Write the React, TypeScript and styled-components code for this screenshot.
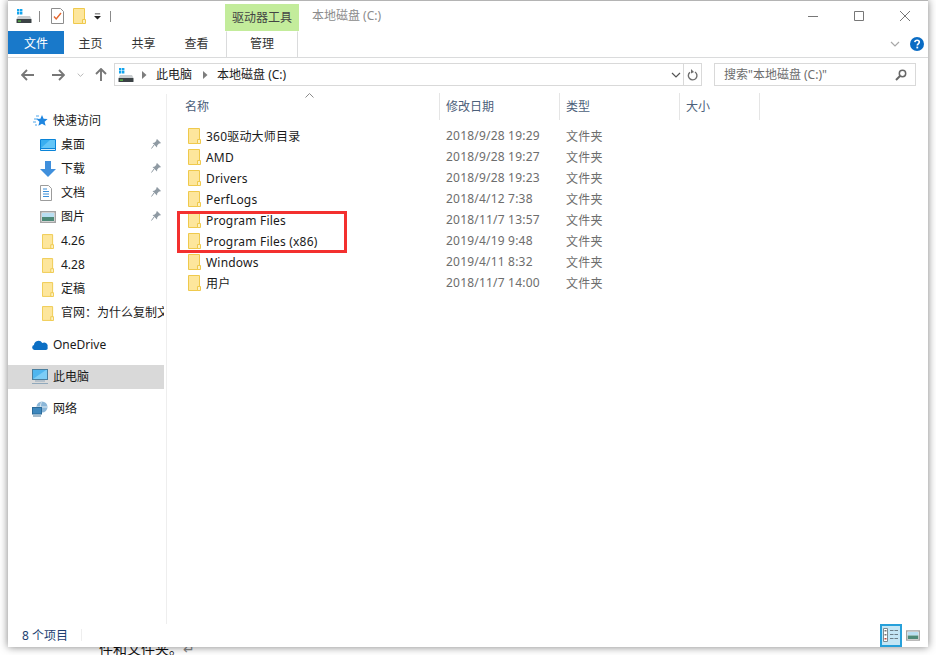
import React from 'react';
import styled, { createGlobalStyle } from 'styled-components';

const GlobalStyle = createGlobalStyle`
  html, body { margin: 0; padding: 0; background: #fff; }
  body { font-family: "Noto Sans", "Noto Sans CJK SC", sans-serif; font-size: 12px; color: #1a1a1a; }
`;

const Page = styled.div`
  width: 936px;
  height: 655px;
  overflow: hidden;
  background: #fff;
`;

const Window = styled.div`
  position: relative;
  z-index: 1;
  margin: 0 8px;
  width: 920px;
  height: 647px;
  background: #fff;
  border-top: 1px solid #b4b4b4;
  box-sizing: border-box;
  box-shadow: 0 0 8px rgba(0, 0, 0, 0.5);
  display: flex;
  flex-direction: column;
`;

const BehindText = styled.div`
  margin: -7px 0 0 99px;
  font-size: 14px;
  line-height: 16px;
  color: #111;
  font-family: "Noto Sans CJK SC", sans-serif;
`;

const ReturnMark = styled.span`
  color: #888;
`;

const TitleRow = styled.div`
  height: 30px;
  display: flex;
  align-items: center;
  padding-left: 8px;
`;

const QuickDivider = styled.div<{ $left: number; $right: number }>`
  width: 1px;
  height: 11px;
  background: #8a8a8a;
  margin: 0 ${(p) => p.$right}px 0 ${(p) => p.$left}px;
`;

const QuickSlot = styled.span<{ $left: number }>`
  margin-left: ${(p) => p.$left}px;
  display: flex;
`;

const ToolTab = styled.div`
  align-self: flex-end;
  width: 74px;
  height: 27px;
  margin-left: 114px;
  padding-bottom: 2px;
  box-sizing: border-box;
  background: #c3ec9b;
  color: #444;
  display: flex;
  align-items: center;
  justify-content: center;
`;

const WindowTitle = styled.div`
  margin-left: 13px;
  color: #8c8c8c;
  padding-bottom: 2px;
`;

const WindowButtons = styled.div`
  margin-left: auto;
  display: flex;
  align-items: center;
  padding-right: 18px;
  gap: 36px;
`;

const TabRow = styled.div`
  height: 26px;
  display: flex;
  align-items: flex-start;
  border-bottom: 1px solid #dadbdc;
  position: relative;
`;

const FileTab = styled.div`
  width: 56px;
  height: 23px;
  background: #1979ca;
  color: #fff;
  display: flex;
  align-items: center;
  justify-content: center;
`;

const Tab = styled.div`
  width: 53px;
  height: 23px;
  display: flex;
  align-items: center;
  justify-content: center;
  color: #333;
`;

const ManageTab = styled(Tab)`
  width: 72px;
  height: 26px;
  margin-left: 3px;
  padding-bottom: 3px;
  box-sizing: border-box;
  border: 1px solid #dadbdc;
  border-width: 1px 1px 0;
  border-top-color: #fff;
`;

const RibbonRight = styled.div`
  margin-left: auto;
  height: 26px;
  display: flex;
  align-items: center;
  gap: 10px;
  padding: 0 4px 0 0;
`;

const AddressRow = styled.div`
  height: 33px;
  display: flex;
  align-items: center;
`;

const NavButtons = styled.div`
  width: 106px;
  padding-left: 13px;
  box-sizing: border-box;
  display: flex;
  align-items: center;
`;

const NavGap = styled.span<{ $width: number }>`
  width: ${(p) => p.$width}px;
`;

const AddressBox = styled.div`
  width: 588px;
  height: 23px;
  box-sizing: border-box;
  border: 1px solid #d9d9d9;
  display: flex;
  align-items: center;
  padding-left: 3px;
  color: #222;
`;

const Crumb = styled.span<{ $left: number }>`
  margin: 0 9px 0 ${(p) => p.$left}px;
  display: flex;
`;

const BoxText = styled.span`
  padding-bottom: 2px;
`;

const BoxEnd = styled.div`
  margin-left: auto;
  display: flex;
  align-items: center;
  height: 100%;
`;

const RefreshCell = styled.div`
  width: 17px;
  height: 100%;
  margin-left: 2px;
  border-left: 1px solid #d9d9d9;
  display: flex;
  align-items: center;
  justify-content: center;
`;

const SearchBox = styled.div`
  margin-left: 12px;
  width: 202px;
  height: 23px;
  box-sizing: border-box;
  border: 1px solid #d9d9d9;
  display: flex;
  align-items: center;
  justify-content: space-between;
  padding: 0 8px 0 9px;
  color: #6d6d6d;
`;

const Body = styled.div`
  flex: 1;
  display: flex;
  min-height: 0;
`;

const NavPane = styled.div`
  width: 159px;
  box-sizing: border-box;
  border-right: 1px solid #eeeeee;
  margin-top: 3px;
  padding-top: 15px;
`;

const NavRow = styled.div<{ $indent: number; $gap?: number; $selected?: boolean }>`
  width: 156px;
  height: 24px;
  margin-top: ${(p) => p.$gap ?? 0}px;
  padding: 0 0 2px ${(p) => p.$indent}px;
  box-sizing: border-box;
  display: flex;
  align-items: center;
  white-space: nowrap;
  overflow: hidden;
  background: ${(p) => (p.$selected ? '#d9d9d9' : 'transparent')};
  color: #1a1a1a;
`;

const NavIcon = styled.span<{ $width: number }>`
  width: ${(p) => p.$width}px;
  flex: none;
  display: flex;
  align-items: center;
  padding-top: 2px;
`;

const PinSlot = styled.span`
  margin-left: auto;
  padding-right: 3px;
  display: flex;
`;

const Content = styled.div`
  flex: 1;
  padding-top: 2px;
  position: relative;
`;

const HeaderRow = styled.div`
  height: 27px;
  display: grid;
  grid-template-columns: 273px 120px 120px 80px;
  color: #4c607a;
`;

const HeaderCell = styled.div`
  padding: 0 0 2px 18px;
  border-right: 1px solid #e5e5e5;
  display: flex;
  align-items: center;
  box-sizing: border-box;
  position: relative;
  &:not(:first-child) { padding-left: 6px; }
`;

const SortCaret = styled.span`
  position: absolute;
  left: 138px;
  top: 0;
  display: flex;
`;

const Rows = styled.div`
  padding-top: 5px;
`;

const FileRow = styled.div`
  height: 21px;
  display: grid;
  grid-template-columns: 273px 120px 120px;
  align-items: center;
`;

const NameCell = styled.div`
  display: flex;
  align-items: center;
  padding-left: 21px;
  gap: 5px;
  color: #1a1a1a;
  letter-spacing: 0.2px;
  line-height: 18px;
`;

const FileName = styled.span`
  padding-top: 2px;
`;

const MetaCell = styled.div`
  padding-left: 6px;
  color: #6d6d6d;
  letter-spacing: 0.2px;
`;

const Highlight = styled.div`
  position: absolute;
  left: 10px;
  top: 120px;
  width: 170px;
  height: 42px;
  box-sizing: border-box;
  border: 3px solid #f3302f;
`;

const StatusBar = styled.div`
  height: 22px;
  display: flex;
  align-items: center;
  padding: 0 0 1px 14px;
  color: #1d3f72;
  position: relative;
`;

const StatusDivider = styled.div`
  width: 1px;
  height: 12px;
  background: #eeeeee;
  margin-left: 13px;
`;

const ViewButtons = styled.div`
  margin-left: auto;
  display: flex;
  align-items: center;
  padding-right: 4px;
`;

const ViewButton = styled.div<{ $active?: boolean }>`
  width: 22px;
  height: 23px;
  box-sizing: border-box;
  display: flex;
  align-items: center;
  justify-content: center;
  border: 2px solid ${(p) => (p.$active ? '#26a0da' : 'transparent')};
  background: ${(p) => (p.$active ? '#c4e6f5' : 'transparent')};
`;

const Folder = ({ w = 13, h = 16 }: { w?: number; h?: number }) => (
  <svg width={w} height={h} viewBox="0 0 13 16">
    <path d="M.5.5h11v15H.5z" fill="#fde69c" stroke="#efc94c" />
    <path d="M9.5 15.5v-4h3v4z" fill="#fdf2c4" stroke="#efc94c" />
  </svg>
);

const Drive = () => (
  <svg width="16" height="16" viewBox="0 0 16 16">
    <path d="M1 1h2.4v2.4H1zM4 1h2.4v2.4H4zM1 4h2.4v2.4H1zM4 4h2.4v2.4H4z" fill="#12a5ee" />
    <path d="M2 8h12l1.5 3H.5z" fill="#c9cdd0" />
    <rect x="0.5" y="11" width="15" height="4" rx="0.5" fill="#3b4245" />
    <rect x="2" y="12.5" width="3" height="1.2" fill="#62d04a" />
  </svg>
);

const Check = () => (
  <svg width="13" height="16" viewBox="0 0 13 16">
    <path d="M.5.5h9l3 3v12H.5z" fill="#fff" stroke="#8d8d8d" />
    <path d="M3 8.500l2.200 2.500L10 5" fill="none" stroke="#e4672f" strokeWidth="1.4" />
  </svg>
);

const DropMark = () => (
  <svg width="7" height="7" viewBox="0 0 8 7">
    <path d="M1 0h6v1H1zM0 3h8L4 7z" fill="#222" />
  </svg>
);

const Minimize = () => (
  <svg width="10" height="10" viewBox="0 0 10 10"><path d="M0 5.500h10" stroke="#777" /></svg>
);
const Maximize = () => (
  <svg width="10" height="10" viewBox="0 0 10 10"><path d="M.5.5h9v9h-9z" fill="none" stroke="#777" /></svg>
);
const Close = () => (
  <svg width="10" height="10" viewBox="0 0 10 10"><path d="M0 0l10 10M10 0L0 10" stroke="#777" /></svg>
);

const Chevron = ({ color = '#8a8a8a', w = 10 }: { color?: string; w?: number }) => (
  <svg width={w} height="6" viewBox="0 0 10 6">
    <path d="M1 1l4 4 4-4" fill="none" stroke={color} strokeWidth="1.2" />
  </svg>
);

const Help = () => (
  <svg width="14" height="14" viewBox="0 0 14 14">
    <circle cx="7" cy="7" r="7" fill="#0a6cc4" />
    <path d="M4.800 5.200C5 3.800 6 3.200 7.100 3.200c1.300 0 2.200.8 2.200 1.900 0 1.700-2 1.700-2 3.400" fill="none" stroke="#fff" strokeWidth="1.6" />
    <rect x="6.400" y="9.600" width="1.800" height="1.800" fill="#fff" />
  </svg>
);

const Arrow = ({ dir, color }: { dir: 'left' | 'right' | 'up'; color: string }) => {
  const d = { left: 'M6 1L1 6l5 5M1 6h12', right: 'M8 1l5 5-5 5M13 6H1', up: 'M1 6l5-5 5 5M6 1v12' }[dir];
  return (
    <svg width={dir === 'up' ? 12 : 14} height={dir === 'up' ? 14 : 12} viewBox={dir === 'up' ? '0 0 12 14' : '0 0 14 12'}>
      <path d={d} fill="none" stroke={color} strokeWidth="1.9" />
    </svg>
  );
};

const CrumbArrow = () => (
  <svg width="5" height="8" viewBox="0 0 5 8"><path d="M0 0l4.500 4L0 8z" fill="#7d7d7d" /></svg>
);

const Refresh = () => (
  <svg width="11" height="12" viewBox="0 0 11 12">
    <path d="M3 3.200A4.300 4.300 0 1 0 8 3" fill="none" stroke="#6e6e6e" strokeWidth="1.4" />
    <path d="M4 0v4.500L7 3z" fill="#6e6e6e" />
  </svg>
);

const Magnifier = () => (
  <svg width="12" height="12" viewBox="0 0 12 12">
    <circle cx="7.500" cy="4.500" r="3.200" fill="none" stroke="#666" strokeWidth="1.5" />
    <path d="M5 7l-4 4" stroke="#666" strokeWidth="2" />
  </svg>
);

const QuickStar = () => (
  <svg width="15" height="14" viewBox="0 0 15 14">
    <path d="M9 1l1.600 3.800 4 .3-3 2.700 1 4L9 9.700l-3.600 2.100 1-4-3-2.700 4-.3z" fill="#1f86e0" />
    <path d="M1 5h4M0 8h3M2 11h2M3 2h3" stroke="#4fa6ec" />
  </svg>
);

const Desktop = () => (
  <svg width="16" height="12" viewBox="0 0 16 12">
    <rect width="16" height="12" rx="1" fill="#0a84d8" />
    <path d="M1 1h14v8H1z" fill="#39aef0" />
    <path d="M1 9l9-8h5v8z" fill="#63c5f7" />
    <path d="M1 10.500h14" stroke="#cfeafb" />
  </svg>
);

const Download = () => (
  <svg width="16" height="16" viewBox="0 0 16 16">
    <path d="M5 0h6v8h5l-8 8-8-8h5z" fill="#3f8fdc" />
  </svg>
);

const Doc = () => (
  <svg width="12" height="16" viewBox="0 0 12 16">
    <path d="M.5.5h8l3 3v12H.5z" fill="#fff" stroke="#9c9c9c" />
    <path d="M3 4h4M3 6.500h6M3 9h6M3 11.500h6" stroke="#3d8fd8" />
  </svg>
);

const Picture = ({ w = 16, h = 12 }: { w?: number; h?: number }) => (
  <svg width={w} height={h} viewBox="0 0 16 12">
    <rect x="0.750" y="0.750" width="14.500" height="10.500" fill="#fff" stroke="#a4a4a4" strokeWidth="1.500" />
    <rect x="2" y="2" width="12" height="4" fill="#b9dff2" />
    <rect x="2" y="6" width="12" height="4" fill="#4d8a78" />
  </svg>
);

const Pin = () => (
  <svg width="10" height="10" viewBox="0 0 10 10">
    <path d="M6 0l4 4-1 .6-1 0-1.800 2L6 8.500 1.500 4 3.300 3.800 5.300 2l0-1z" fill="#8f9aa3" />
    <path d="M3 6L.5 9.500" stroke="#8f9aa3" />
  </svg>
);

const Cloud = () => (
  <svg width="16" height="10" viewBox="0 0 16 10">
    <path d="M2.500 10A2.500 2.500 0 0 1 2 5.100 4.500 4.500 0 0 1 10.300 3 3.500 3.500 0 0 1 15.500 7c.6 1.500-.2 3-1.700 3z" fill="#0c6fc4" />
  </svg>
);

const Monitor = () => (
  <svg width="16" height="16" viewBox="0 0 16 16">
    <rect x="0.500" y="0.500" width="15" height="10" fill="#4fb6ef" stroke="#4a7f9f" />
    <path d="M1 10L14 1h1v9z" fill="#7ccdf6" />
    <path d="M3 12h10M0 14.500h16" stroke="#90a8bb" strokeWidth="1.200" />
  </svg>
);

const Network = () => (
  <svg width="16" height="16" viewBox="0 0 16 16">
    <circle cx="10" cy="6" r="5.500" fill="#8cb7d8" />
    <path d="M10 .5c-2 2-2 8 0 11M5 6h10" stroke="#dfeaf2" fill="none" />
    <rect x="0.500" y="6.500" width="9" height="6.500" fill="#3d87bd" stroke="#2b6a99" />
    <path d="M1 15h8" stroke="#6a8ea8" strokeWidth="1.200" />
  </svg>
);

const DetailsView = () => (
  <svg width="16" height="16" viewBox="0 0 16 16">
    <path d="M.5 1.500h4v13h-4z" fill="#fff" stroke="#7d8a90" />
    <path d="M1.500 3h2v1.500h-2zM1.500 7h2v1.500h-2z" fill="#777" />
    <path d="M1.500 11h2v1.500h-2z" fill="#c04a3a" />
    <path d="M7 3.500h3.500M11.500 3.500h3.500M7 7.500h3.500M11.500 7.500h3.500M7 11.500h3.500M11.500 11.500h3.500" stroke="#6c7f88" strokeWidth="1.200" />
  </svg>
);

const CaretUp = () => (
  <svg width="9" height="5" viewBox="0 0 9 5"><path d="M.5 4.500l4-4 4 4" fill="none" stroke="#8a8a8a" /></svg>
);

const quickItems = [
  { label: '桌面', icon: <Desktop /> },
  { label: '下载', icon: <Download /> },
  { label: '文档', icon: <Doc /> },
  { label: '图片', icon: <Picture /> },
];

const pinnedFolders = ['4.26', '4.28', '定稿', '官网\uFF1A为什么复制文'];

const files = [
  { name: '360驱动大师目录', date: '2018/9/28 19:29' },
  { name: 'AMD', date: '2018/9/28 19:27' },
  { name: 'Drivers', date: '2018/9/28 19:23' },
  { name: 'PerfLogs', date: '2018/4/12 7:38' },
  { name: 'Program Files', date: '2018/11/7 13:57' },
  { name: 'Program Files (x86)', date: '2019/4/19 9:48' },
  { name: 'Windows', date: '2019/4/11 8:32' },
  { name: '用户', date: '2018/11/7 14:00' },
];

const App: React.FC = () => {
  return (
    <Page>
      <GlobalStyle />
      <Window>
        <TitleRow>
          <Drive />
          <QuickDivider $left={7} $right={0} />
          <QuickSlot $left={11}><Check /></QuickSlot>
          <QuickSlot $left={9}><Folder /></QuickSlot>
          <QuickSlot $left={8}><DropMark /></QuickSlot>
          <QuickDivider $left={9} $right={0} />
          <ToolTab>驱动器工具</ToolTab>
          <WindowTitle>本地磁盘 (C:)</WindowTitle>
          <WindowButtons>
            <Minimize />
            <Maximize />
            <Close />
          </WindowButtons>
        </TitleRow>
        <TabRow>
          <FileTab>文件</FileTab>
          <Tab>主页</Tab>
          <Tab>共享</Tab>
          <Tab>查看</Tab>
          <ManageTab>管理</ManageTab>
          <RibbonRight>
            <Chevron color="#a8a8a8" />
            <Help />
          </RibbonRight>
        </TabRow>
        <AddressRow>
          <NavButtons>
            <Arrow dir="left" color="#777" />
            <NavGap $width={16} />
            <Arrow dir="right" color="#777" />
            <NavGap $width={12} />
            <Chevron color="#aaa" w={7} />
            <NavGap $width={11} />
            <Arrow dir="up" color="#777" />
          </NavButtons>
          <AddressBox>
            <Drive />
            <Crumb $left={8}><CrumbArrow /></Crumb>
            <BoxText>此电脑</BoxText>
            <Crumb $left={11}><CrumbArrow /></Crumb>
            <BoxText>本地磁盘 (C:)</BoxText>
            <BoxEnd>
              <Chevron color="#555" />
              <RefreshCell><Refresh /></RefreshCell>
            </BoxEnd>
          </AddressBox>
          <SearchBox>
            <BoxText>搜索"本地磁盘 (C:)"</BoxText>
            <Magnifier />
          </SearchBox>
        </AddressRow>
        <Body>
          <NavPane>
            <NavRow $indent={25}>
              <NavIcon $width={20}><QuickStar /></NavIcon>快速访问
            </NavRow>
            {quickItems.map((item) => (
              <NavRow key={item.label} $indent={32}>
                <NavIcon $width={21}>{item.icon}</NavIcon>{item.label}
                <PinSlot><Pin /></PinSlot>
              </NavRow>
            ))}
            {pinnedFolders.map((name) => (
              <NavRow key={name} $indent={34}>
                <NavIcon $width={19}><Folder w={12} h={15} /></NavIcon>{name}
              </NavRow>
            ))}
            <NavRow $indent={24} $gap={8}>
              <NavIcon $width={21}><Cloud /></NavIcon>OneDrive
            </NavRow>
            <NavRow $indent={24} $gap={8} $selected>
              <NavIcon $width={21}><Monitor /></NavIcon>此电脑
            </NavRow>
            <NavRow $indent={24} $gap={8}>
              <NavIcon $width={21}><Network /></NavIcon>网络
            </NavRow>
          </NavPane>
          <Content>
            <HeaderRow>
              <HeaderCell>
                名称
                <SortCaret><CaretUp /></SortCaret>
              </HeaderCell>
              <HeaderCell>修改日期</HeaderCell>
              <HeaderCell>类型</HeaderCell>
              <HeaderCell>大小</HeaderCell>
            </HeaderRow>
            <Rows>
              {files.map((file) => (
                <FileRow key={file.name}>
                  <NameCell>
                    <Folder />
                    <FileName>{file.name}</FileName>
                  </NameCell>
                  <MetaCell>{file.date}</MetaCell>
                  <MetaCell>文件夹</MetaCell>
                </FileRow>
              ))}
            </Rows>
            <Highlight />
          </Content>
        </Body>
        <StatusBar>
          8 个项目
          <StatusDivider />
          <ViewButtons>
            <ViewButton $active><DetailsView /></ViewButton>
            <ViewButton><Picture w={14} h={11} /></ViewButton>
          </ViewButtons>
        </StatusBar>
      </Window>
      <BehindText>件和文件夹。<ReturnMark>↵</ReturnMark></BehindText>
    </Page>
  );
};

export default App;
